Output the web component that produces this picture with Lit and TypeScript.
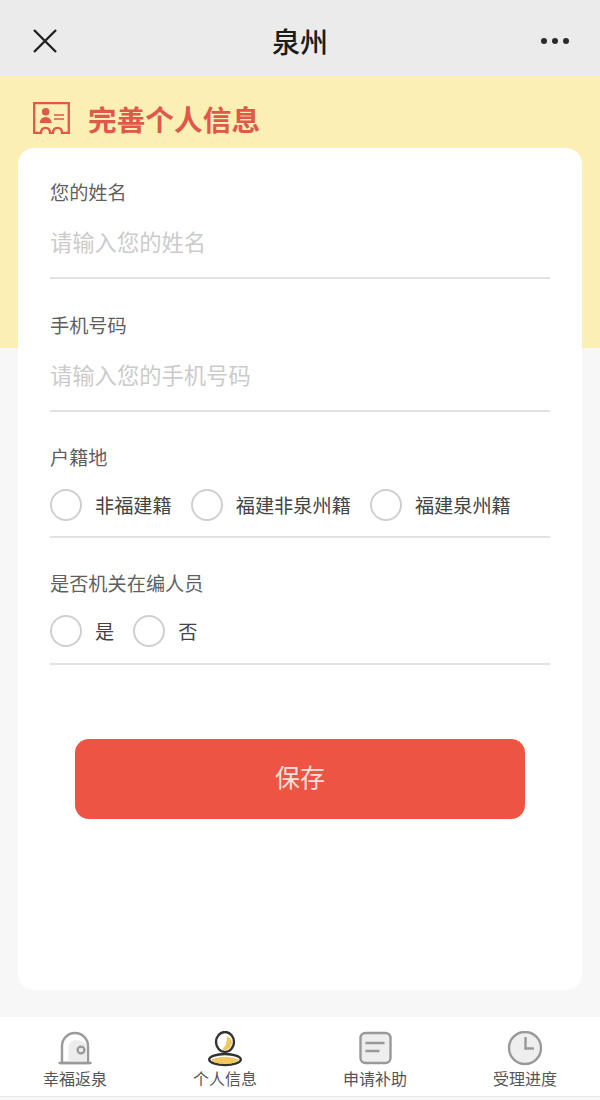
import { LitElement, html, css, svg } from "lit";
import { customElement } from "lit/decorators.js";

const tabs = [
  {
    label: "幸福返泉",
    active: false,
    icon: svg`<path d="M6 32V15a13 13 0 0 1 26 0v17z" fill="#fff" stroke="#9a9a9a" stroke-width="2.4"/>
      <path d="M12.500 31V16q1-7 8-7 9 1 10.300 6v16z" fill="#ececec"/>
      <circle cx="25" cy="19" r="3.400" fill="none" stroke="#999" stroke-width="2.200"/>
      <path d="M3.500 32h31" stroke="#9a9a9a" stroke-width="2.400" stroke-linecap="round"/>`,
  },
  {
    label: "个人信息",
    active: true,
    icon: svg`<ellipse cx="19" cy="11" rx="9" ry="10" fill="#fff" stroke="#333" stroke-width="2.400"/>
      <path d="M21 5.500a6.500 7 0 0 1 5 6 7 7.500 0 0 1-7 7.500q-2 0-3-.8 5-3 5-12.700z" fill="#f2c75c"/>
      <ellipse cx="19" cy="28.500" rx="15.800" ry="5.500" fill="#fff" stroke="#333" stroke-width="2.400"/>
      <path d="M5 28.500q14-5.500 28 0q-3 4.300-14 4.300T5 28.500z" fill="#f2c75c"/>`,
  },
  {
    label: "申请补助",
    active: false,
    icon: svg`<rect x="4.500" y="2" width="30" height="30" rx="5" fill="#eee" stroke="#999" stroke-width="2.400"/>
      <path d="M9.500 12h19M9.500 20h14" stroke="#999" stroke-width="2.400"/>`,
  },
  {
    label: "受理进度",
    active: false,
    icon: svg`<circle cx="19" cy="17" r="16" fill="#eee" stroke="#999" stroke-width="2.400"/>
      <path d="M19.500 6v11.500h8.500" fill="none" stroke="#999" stroke-width="2.400"/>`,
  },
];

@customElement("app-root")
export class AppRoot extends LitElement {
  static styles = css`
    :host {
      display: block;
      width: 600px;
      height: 1100px;
      overflow: hidden;
      background: #f7f7f7;
      font-family: "Noto Sans CJK SC", "Liberation Sans", sans-serif;
      color: #555;
    }
    .nav {
      height: 76px;
      background: #ebebeb;
      display: grid;
      grid-template-columns: 1fr auto 1fr;
      align-items: center;
      padding: 6px 30px 0;
      box-sizing: border-box;
    }
    .nav svg { display: block; }
    .close { justify-self: start; margin-left: 2px; }
    .more { justify-self: end; }
    .title {
      font-size: 28px;
      font-weight: 500;
      color: #1c1c1c;
      line-height: 1;
    }
    .main {
      height: 941px;
      box-sizing: border-box;
      padding: 0 18px;
      background: linear-gradient(#fcefb4 272px, #f7f7f7 272px);
    }
    .heading {
      height: 72px;
      display: flex;
      align-items: flex-start;
      gap: 18px;
      padding: 26px 0 0 15px;
      box-sizing: border-box;
    }
    .heading svg { display: block; }
    .heading span {
      font-size: 28.700px;
      font-weight: 700;
      line-height: 36px;
      color: #df5849;
      margin-top: -1px;
    }
    .card {
      height: 842px;
      box-sizing: border-box;
      background: #fff;
      border-radius: 16px;
      padding: 26px 32px 0;
    }
    .field {
      box-sizing: border-box;
      border-bottom: 2px solid #e2e2e2;
      display: flex;
      flex-direction: column;
    }
    .label {
      font-size: 19.200px;
      line-height: 36px;
      height: 38px;
      color: #5f5f5f;
    }
    .placeholder {
      font-size: 22.300px;
      line-height: 50px;
      height: 65px;
      padding-top: 4px;
      box-sizing: border-box;
      color: #cbcbcb;
    }
    .text-field { height: 105px; margin-bottom: 28px; }
    .text-field + .radio-field { margin-top: -1px; }
    .radio-field { height: 99px; margin-bottom: 28px; }
    .radio-field + .radio-field { margin-top: -1px; height: 100px; }
    .radios {
      display: flex;
      align-items: center;
      height: 32px;
      margin-top: 12px;
      color: #444;
      font-size: 19.200px;
      line-height: 28px;
    }
    .circle {
      width: 32px;
      height: 32px;
      box-sizing: border-box;
      border: 2px solid #cfcfcf;
      border-radius: 50%;
      margin-right: 13px;
      flex: none;
    }
    .opt { display: flex; align-items: center; margin-right: 19px; }
    .save {
      margin: 74px 25px 0;
      height: 80px;
      border-radius: 14px;
      background: #ee5443;
      color: #fbe3dc;
      font-size: 25px;
      line-height: 1;
      padding-bottom: 6px;
      box-sizing: border-box;
      display: flex;
      align-items: center;
      justify-content: center;
    }
    .tabbar {
      height: 80px;
      background: #fff;
      border-bottom: 1px solid #e8e8e8;
      box-sizing: border-box;
      display: grid;
      grid-template-columns: repeat(4, 150px);
    }
    .tab {
      display: flex;
      flex-direction: column;
      align-items: center;
      padding-top: 14px;
      box-sizing: border-box;
      font-size: 16px;
      line-height: 22px;
      color: #555;
    }
    .tab svg { display: block; }
  `;

  render() {
    return html`
      <div class="nav">
        <svg class="close" width="26" height="26" viewBox="0 0 26 26">
          <path d="M2 2l22 22M24 2L2 24" stroke="#222" stroke-width="2.400" fill="none"/>
        </svg>
        <div class="title">泉州</div>
        <svg class="more" width="30" height="10" viewBox="0 0 30 10">
          <circle cx="4" cy="5" r="3" fill="#2a2a2a"/>
          <circle cx="15" cy="5" r="3" fill="#2a2a2a"/>
          <circle cx="26" cy="5" r="3" fill="#2a2a2a"/>
        </svg>
      </div>
      <div class="main">
        <div class="heading">
          <svg width="37" height="32" viewBox="0 0 37 32" fill="none" stroke="#df5849" stroke-width="2.300">
            <path d="M1.200 1.200h34.600v29.600h-6.800q0-5-4.500-5t-4.500 5h-3q0-5-4.500-5t-4.500 5H1.200z"/>
            <circle cx="12.700" cy="9.700" r="3.800" fill="#df5849" stroke="none"/>
            <path d="M6.500 21q1-6 6.200-6t6.200 6z" fill="#df5849" stroke="none"/>
            <path d="M21 13h10M21 17h10" stroke-width="1.500"/>
          </svg>
          <span>完善个人信息</span>
        </div>
        <div class="card">
          <div class="field text-field">
            <div class="label">您的姓名</div>
            <div class="placeholder">请输入您的姓名</div>
          </div>
          <div class="field text-field">
            <div class="label">手机号码</div>
            <div class="placeholder">请输入您的手机号码</div>
          </div>
          <div class="field radio-field">
            <div class="label">户籍地</div>
            <div class="radios">
              <div class="opt"><div class="circle"></div>非福建籍</div>
              <div class="opt"><div class="circle"></div>福建非泉州籍</div>
              <div class="opt"><div class="circle"></div>福建泉州籍</div>
            </div>
          </div>
          <div class="field radio-field">
            <div class="label">是否机关在编人员</div>
            <div class="radios">
              <div class="opt"><div class="circle"></div>是</div>
              <div class="opt"><div class="circle"></div>否</div>
            </div>
          </div>
          <div class="save">保存</div>
        </div>
      </div>
      <div class="tabbar">
        ${tabs.map(
          (t) => html`<div class="tab">
            <svg width="39" height="36" viewBox="0 0 39 36">${t.icon}</svg>
            <span>${t.label}</span>
          </div>`
        )}
      </div>
    `;
  }
}
